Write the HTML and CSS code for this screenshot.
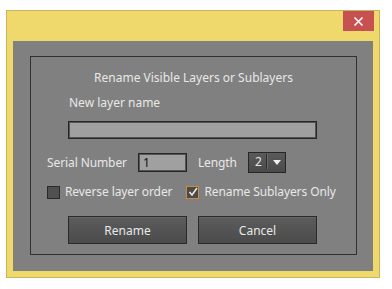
FILE: index.html
```html
<!DOCTYPE html>
<html lang="en">
<head>
<meta charset="UTF-8">
<title>Rename Visible Layers or Sublayers</title>
<link rel="stylesheet" href="styles.css">
</head>
<body>
<div class="ventana">
    <div class="barra">
        <button class="cerrar" type="button" aria-label="Close">
            <svg width="11" height="11" viewBox="0 0 11 11"><path d="M1.5 1.5 L9.5 9.5 M9.5 1.5 L1.5 9.5" stroke="#fff" stroke-width="1.6" fill="none"/></svg>
        </button>
    </div>
    <div class="fondo">
        <div class="panel">
            <div class="titulo">Rename Visible Layers or Sublayers</div>
            <div class="etiqueta-nombre">New layer name</div>
            <input class="campo-nombre" type="text" value="">
            <div class="fila-serie">
                <span>Serial Number</span>
                <input class="campo-serie" type="text" value="1">
                <span>Length</span>
                <div class="desplegable">
                    <span class="valor">2</span>
                    <span class="flecha"></span>
                </div>
            </div>
            <div class="fila-checks">
                <label class="check"><span class="caja"></span>Reverse layer order</label>
                <label class="check"><span class="caja marcada"><svg width="10" height="10" viewBox="0 0 10 10"><path d="M1.5 5 L4 8 L9 1" stroke="#e8e8e8" stroke-width="1.6" fill="none"/></svg></span>Rename Sublayers Only</label>
            </div>
            <div class="botones">
                <button type="button" class="boton">Rename</button>
                <button type="button" class="boton">Cancel</button>
            </div>
        </div>
    </div>
</div>
</body>
</html>
```

FILE: styles.css
```css
* {
    box-sizing: border-box;
}
body {
    margin: 0;
    background: #fff;
    font-family: 'Noto Sans', sans-serif;
    font-size: 12px;
}
.ventana {
    margin: 10px 0 0 6px;
    width: 374px;
    height: 268px;
    border: 1px solid #c9b45c;
    background: #efd86c;
}
.barra {
    height: 30px;
    display: flex;
    justify-content: flex-end;
    padding-right: 5px;
}
.cerrar {
    width: 31px;
    height: 20px;
    border: none;
    padding: 0;
    background: #c75050;
    display: flex;
    align-items: center;
    justify-content: center;
}
.fondo {
    margin: 0 6px 0 6px;
    height: 230px;
    background: #808080;
    padding: 15px 16px 16px 17px;
}
.panel {
    height: 199px;
    border: 1px solid #303030;
    color: #e8e8e8;
    line-height: 16px;
}
.titulo {
    margin-top: 13px;
    text-align: center;
}
.etiqueta-nombre {
    margin-top: 9px;
    padding-left: 38px;
}
.campo-nombre {
    display: block;
    margin: 10px 0 0 37px;
    width: 249px;
    height: 18px;
    border: 1px solid #262626;
    box-shadow: inset 0 0 0 1px #555;
    background: #a0a0a0;
    padding: 0;
}
.fila-serie {
    margin-top: 13px;
    height: 21px;
    padding-left: 16px;
    display: flex;
    align-items: center;
    gap: 11px;
    letter-spacing: -0.1px;
}
.campo-serie {
    width: 49px;
    height: 19px;
    border: 1px solid #262626;
    box-shadow: inset 0 0 0 1px #555;
    background: #a0a0a0;
    color: #111;
    font-family: 'Noto Sans', sans-serif;
    font-size: 12px;
    padding: 0 4px;
}
.desplegable {
    width: 38px;
    height: 21px;
    border: 1px solid #262626;
    background: linear-gradient(#5a5a5a, #4a4a4a);
    display: flex;
    align-items: center;
}
.desplegable .valor {
    width: 18px;
    padding-left: 6px;
    border-right: 1px solid #2e2e2e;
    box-shadow: 1px 0 0 #6a6a6a;
    line-height: 15px;
    margin-top: -2px;
}
.flecha {
    margin-left: 6px;
    width: 0;
    height: 0;
    border-left: 4px solid transparent;
    border-right: 4px solid transparent;
    border-top: 5px solid #f0f0f0;
}
.fila-checks {
    margin-top: 11px;
    padding-left: 16px;
    display: flex;
    gap: 14px;
    letter-spacing: -0.1px;
}
.check {
    display: flex;
    align-items: center;
    gap: 5px;
}
.caja {
    width: 13px;
    height: 13px;
    border: 1px solid #2a2a2a;
    background: #505050;
    display: flex;
    align-items: center;
    justify-content: center;
}
.caja.marcada {
    border-color: #d08a3c;
    background: #4a4a4a;
}
.botones {
    margin: 16px 0 0 37px;
    display: flex;
    gap: 11px;
}
.boton {
    width: 119px;
    height: 28px;
    border: 1px solid #2a2a2a;
    background: linear-gradient(#5c5c5c, #4b4b4b);
    box-shadow: inset 0 1px 0 #666;
    color: #e8e8e8;
    font-family: 'Noto Sans', sans-serif;
    font-size: 12px;
    padding: 0;
}
```
